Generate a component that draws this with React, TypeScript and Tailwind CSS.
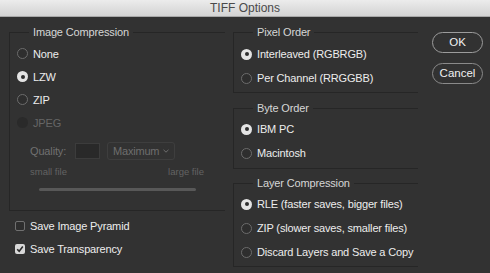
import React from 'react';

const font = { fontFamily: '"Liberation Sans", Arial, sans-serif' };

type RadioProps = { label: string; checked?: boolean; disabled?: boolean; h?: string };

const Radio: React.FC<RadioProps> = ({ label, checked, disabled, h = 'h-[24px]' }) => (
    <div className={`flex items-center gap-[5px] ${h}`}>
        {disabled ? (
            <span className="w-[11px] h-[11px] rounded-full bg-[#2a2a2a]" />
        ) : checked ? (
            <span className="w-[11px] h-[11px] rounded-full bg-[#e4e4e4] flex items-center justify-center">
                <span className="w-[4px] h-[4px] rounded-full bg-[#2e2e2e]" />
            </span>
        ) : (
            <span className="w-[11px] h-[11px] rounded-full border border-[#6c6c6c] bg-[#2e2e2e]" />
        )}
        <span className={`whitespace-nowrap text-[11px] tracking-[-0.15px] leading-[14px] ${disabled ? 'text-[#666666]' : 'text-[#ededed]'}`}>{label}</span>
    </div>
);

const Check: React.FC<{ label: string; checked?: boolean }> = ({ label, checked }) => (
    <div className="flex items-center gap-[5px] h-[23px]">
        {checked ? (
            <span className="w-[10px] h-[10px] rounded-[2px] bg-[#d8d8d8] flex items-center justify-center">
                <svg width="8" height="8" viewBox="0 0 8 8">
                    <path d="M1.2 4.2 L3.2 6.2 L6.8 1.6" fill="none" stroke="#2a2a2a" strokeWidth="1.6" />
                </svg>
            </span>
        ) : (
            <span className="w-[10px] h-[10px] rounded-[2px] border border-[#707070] bg-[#2e2e2e]" />
        )}
        <span className="whitespace-nowrap text-[11px] tracking-[-0.15px] leading-[14px] text-[#ededed]">{label}</span>
    </div>
);

const Group: React.FC<{ title: string; className?: string; children: React.ReactNode }> = ({ title, className = '', children }) => (
    <fieldset className={`border-l border-t border-b border-[#262626] pl-[7px] ${className}`}>
        <legend className="ml-[12px] px-[4px] whitespace-nowrap text-[11px] tracking-[-0.15px] leading-[14px] text-[#d6d6d6]">{title}</legend>
        {children}
    </fieldset>
);

export default function App() {
    return (
        <div className="w-[490px] h-[273px] bg-[#323232] overflow-hidden" style={font}>
            {/* title bar */}
            <div className="h-[16px] bg-gradient-to-b from-[#ececec] to-[#d3d3d3] border-b border-[#a8a8a8] flex items-center justify-center box-content">
                <span className="text-[12px] leading-[14px] text-[#4a4a4a]">TIFF Options</span>
            </div>

            <div className="flex pt-[8px] pl-[9px]">
                {/* left column */}
                <div className="w-[216px] flex flex-col">
                    <Group title="Image Compression" className="pt-[3px] pb-[19px]">
                        <Radio label="None" h="h-[23px]" />
                        <Radio label="LZW" checked h="h-[23px]" />
                        <Radio label="ZIP" h="h-[23px]" />
                        <Radio label="JPEG" disabled h="h-[23px]" />
                        <div className="pl-[13px] mt-[8px] flex items-center h-[18px]">
                            <span className="text-[11px] tracking-[-0.15px] text-[#707070] w-[45px]">Quality:</span>
                            <span className="w-[25px] h-[16px] bg-[#292929] border border-[#3c3c3c]" />
                            <div className="ml-[7px] w-[68px] h-[18px] border border-[#3e3e3e] rounded-[3px] flex items-center justify-between pl-[5px] pr-[5px]">
                                <span className="whitespace-nowrap text-[11px] tracking-[-0.2px] text-[#6e6e6e]">Maximum</span>
                                <svg width="6" height="4" viewBox="0 0 6 4" className="shrink-0">
                                    <path d="M0.5 0.8 L3 3.2 L5.5 0.8" fill="none" stroke="#6e6e6e" strokeWidth="1" />
                                </svg>
                            </div>
                        </div>
                        <div className="pl-[13px] pr-[21px] mt-[6px] flex justify-between text-[9.5px] leading-[12px] text-[#636363]">
                            <span>small file</span>
                            <span>large file</span>
                        </div>
                        <div className="ml-[22px] mt-[10px] w-[157px] h-[3px] rounded-full bg-[#585858]" />
                    </Group>
                    <div className="mt-[3px] pl-[6px]">
                        <Check label="Save Image Pyramid" />
                        <Check label="Save Transparency" checked />
                    </div>
                </div>

                {/* right column */}
                <div className="ml-[8px] w-[185px] flex flex-col">
                    <Group title="Pixel Order" className="pt-[3px] pb-[2px]">
                        <Radio label="Interleaved (RGBRGB)" checked />
                        <Radio label="Per Channel (RRGGBB)" />
                    </Group>
                    <Group title="Byte Order" className="mt-[8px] pt-[2px] pb-[3px]">
                        <Radio label="IBM PC" checked />
                        <Radio label="Macintosh" />
                    </Group>
                    <Group title="Layer Compression" className="mt-[7px] pt-[2px] pb-[2px]">
                        <Radio label="RLE (faster saves, bigger files)" checked />
                        <Radio label="ZIP (slower saves, smaller files)" />
                        <Radio label="Discard Layers and Save a Copy" />
                    </Group>
                </div>

                {/* buttons */}
                <div className="ml-[14px] pt-[7px] flex flex-col gap-[10px]">
                    <button className="w-[51px] h-[21px] rounded-full border border-[#9c9c9c] text-[11.5px] text-[#f0f0f0]">OK</button>
                    <button className="w-[51px] h-[21px] rounded-full border border-[#8a8a8a] text-[11.5px] text-[#f0f0f0]">Cancel</button>
                </div>
            </div>
        </div>
    );
}
